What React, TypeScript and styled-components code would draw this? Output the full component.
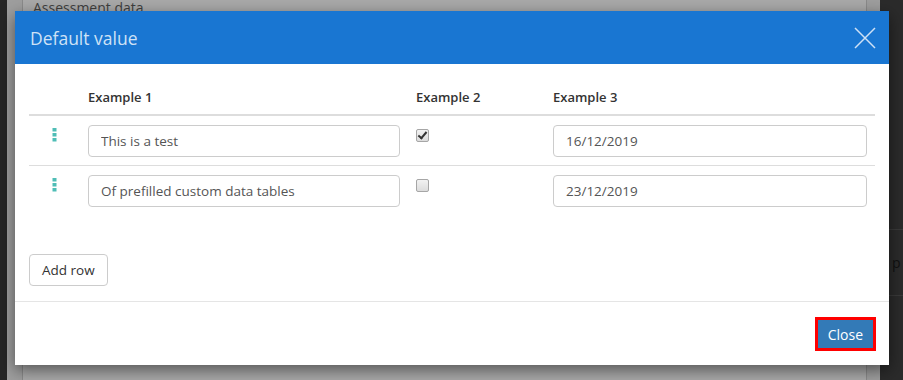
import styled, { createGlobalStyle } from 'styled-components';

const GlobalStyle = createGlobalStyle`
  html, body {
    margin: 0;
    padding: 0;
    background: #262626;
    font-family: 'Open Sans', 'Liberation Sans', sans-serif;
  }
`;

const rows = [
  { id: 1, text: 'This is a test', checked: true, date: '16/12/2019' },
  { id: 2, text: 'Of prefilled custom data tables', checked: false, date: '23/12/2019' },
];

function DragHandle() {
  return (
    <svg width="5" height="14" viewBox="0 0 5 14">
      <rect x="0.5" y="0" width="4" height="3.5" fill="#4fbdb6" />
      <rect x="0.5" y="5" width="4" height="3.5" fill="#4fbdb6" />
      <rect x="0.5" y="10" width="4" height="3.5" fill="#4fbdb6" />
    </svg>
  );
}

function CloseIcon() {
  return (
    <svg width="22" height="22" viewBox="0 0 22 22">
      <path d="M1 1 L21 21 M21 1 L1 21" stroke="#cfe1f5" strokeWidth="1.5" />
    </svg>
  );
}

export default function App() {
  return (
    <>
      <GlobalStyle />
      <Page>
        <LeftRail />
        <Backdrop>
          <BackPanel>
            <BackTitle>Assessment data</BackTitle>
          </BackPanel>
        </Backdrop>
        <RightRail>
          <RailBand>
            <RailText>p</RailText>
          </RailBand>
        </RightRail>

        <Modal>
          <Header>
            <Title>Default value</Title>
            <CloseX aria-label="close">
              <CloseIcon />
            </CloseX>
          </Header>
          <Body>
            <Table>
              <thead>
                <tr>
                  <Th style={{ width: 35 }} />
                  <Th style={{ width: 312 }}>Example 1</Th>
                  <Th style={{ width: 121 }}>Example 2</Th>
                  <Th>Example 3</Th>
                </tr>
              </thead>
              <tbody>
                {rows.map((r, i) => (
                  <Row key={r.id} last={i === rows.length - 1}>
                    <HandleCell>
                      <DragHandle />
                    </HandleCell>
                    <Td>
                      <TextInput defaultValue={r.text} />
                    </Td>
                    <Td>
                      <Check type="checkbox" defaultChecked={r.checked} />
                    </Td>
                    <Td>
                      <TextInput defaultValue={r.date} />
                    </Td>
                  </Row>
                ))}
              </tbody>
            </Table>
            <AddRow>Add row</AddRow>
          </Body>
          <Footer>
            <PrimaryButton>Close</PrimaryButton>
          </Footer>
        </Modal>
      </Page>
    </>
  );
}

const Page = styled.div`
  position: relative;
  display: flex;
  width: 903px;
  height: 380px;
  overflow: hidden;
`;

const LeftRail = styled.div`
  width: 7px;
  background: #262626;
`;

const Backdrop = styled.div`
  flex: 1;
  display: flex;
  background: #9e9e9e;
  padding-left: 15px;
  padding-right: 13px;
`;

const BackPanel = styled.div`
  flex: 1;
  background: #a9a9a9;
  border-left: 1px solid #8a8a8a;
  border-right: 1px solid #8a8a8a;
  padding: 0 10px;
`;

const BackTitle = styled.div`
  font-size: 14px;
  color: #3f3f3f;
  line-height: 18px;
  margin-top: -1px;
`;

const RightRail = styled.div`
  width: 23px;
  background: #2b2b2b;
  padding-top: 229px;
`;

const RailBand = styled.div`
  height: 65px;
  border-top: 1px solid #3a3a3a;
  border-bottom: 1px solid #3a3a3a;
  display: flex;
  align-items: center;
  padding-left: 12px;
`;

const RailText = styled.span`
  font-size: 14px;
  color: #111;
`;

const Modal = styled.div`
  position: absolute;
  left: 15px;
  top: 11px;
  width: 874px;
  height: 354px;
  background: #fff;
  box-shadow: 0 5px 15px rgba(0, 0, 0, 0.5);
  display: flex;
  flex-direction: column;
`;

const Header = styled.div`
  height: 53px;
  background: #1976d2;
  display: flex;
  align-items: center;
  justify-content: space-between;
  padding: 0 13px 0 15px;
`;

const Title = styled.h4`
  margin: 0;
  font-size: 17.5px;
  font-weight: 400;
  color: #cfe2f6;
`;

const CloseX = styled.button`
  background: none;
  border: 0;
  padding: 0;
  display: flex;
  cursor: pointer;
`;

const Body = styled.div`
  flex: 1;
  padding: 15px 14px;
`;

const Table = styled.table`
  width: 846px;
  border-collapse: collapse;
`;

const Th = styled.th`
  text-align: left;
  font-size: 13px;
  font-weight: 600;
  color: #333;
  height: 35px;
  padding: 0 8px;
  border-bottom: 2px solid #ddd;
  vertical-align: middle;
`;

const Row = styled.tr<{ last?: boolean }>`
  border-bottom: ${(p) => (p.last ? 'none' : '1px solid #ddd')};
`;

const Td = styled.td`
  padding: 9px 8px 8px;
  vertical-align: top;
`;

const HandleCell = styled(Td)`
  padding-top: 12px;
  text-align: center;
  line-height: 0;
`;

const TextInput = styled.input`
  box-sizing: border-box;
  width: 100%;
  height: 32px;
  border: 1px solid #ccc;
  border-radius: 4px;
  padding: 0 12px;
  font-family: 'Open Sans', 'Liberation Sans', sans-serif;
  font-size: 13.5px;
  color: #555;
  outline: none;
`;

const Check = styled.input`
  appearance: none;
  position: relative;
  box-sizing: border-box;
  margin: 3px 0 0 0;
  width: 13px;
  height: 13px;
  border: 1px solid #a6a6a6;
  border-radius: 2px;
  background: linear-gradient(#f2f2f2, #dcdcdc);

  &:checked::after {
    content: '';
    position: absolute;
    left: 3px;
    top: 0px;
    width: 3px;
    height: 7px;
    border: solid #333;
    border-width: 0 2px 2px 0;
    transform: rotate(40deg);
  }
`;

const AddRow = styled.button`
  margin-top: 39px;
  height: 32px;
  padding: 0 12px;
  background: #fff;
  border: 1px solid #ccc;
  border-radius: 4px;
  font-family: 'Open Sans', 'Liberation Sans', sans-serif;
  font-size: 13.5px;
  color: #333;
`;

const Footer = styled.div`
  border-top: 1px solid #e5e5e5;
  padding: 15px 13px 14px;
  display: flex;
  justify-content: flex-end;
`;

const PrimaryButton = styled.button`
  height: 34px;
  padding: 0 10px;
  background: #337ab7;
  border: 3px solid #f00;
  border-radius: 0;
  font-family: 'Open Sans', 'Liberation Sans', sans-serif;
  font-size: 14px;
  color: #fff;
`;
